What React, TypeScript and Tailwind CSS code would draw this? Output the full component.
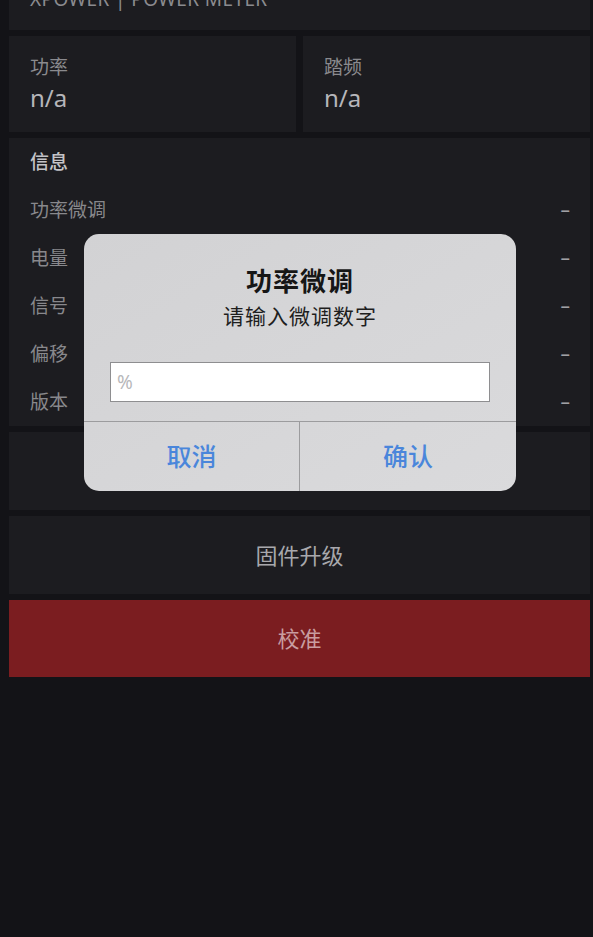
import React from "react";

const FONT = { fontFamily: "'Noto Sans', 'Noto Sans CJK SC', sans-serif" };

const INFO_ROWS = [
  { label: "功率微调", value: "–" },
  { label: "电量", value: "–" },
  { label: "信号", value: "–" },
  { label: "偏移", value: "–" },
  { label: "版本", value: "–" },
];

export default function App() {
  return (
    <div className="relative w-full h-[937px] overflow-hidden bg-[#131317]" style={FONT}>
      <div className="flex flex-col gap-[6px] pl-[9px] pr-[3px]">
        {/* ── Header ─────────────────────────────────── */}
        <div className="h-[30px] bg-[#1c1c20] overflow-hidden pl-[21px]">
          <div className="-mt-[11px] text-[19px] leading-[20px] text-[#8b8b8f] tracking-[0.4px]">
            XPOWER | POWER METER
          </div>
        </div>

        {/* ── Live values ────────────────────────────── */}
        <div className="grid grid-cols-2 gap-[7px]">
          {["功率", "踏频"].map((label) => (
            <div key={label} className="h-[96px] bg-[#1c1c20] pl-[21px] pt-[19px]">
              <div className="text-[19px] leading-[24px] text-[#8a8a8e]">{label}</div>
              <div className="mt-[3px] text-[24px] leading-[32px] text-[#b6b6ba]">n/a</div>
            </div>
          ))}
        </div>

        {/* ── Info ───────────────────────────────────── */}
        <div className="bg-[#1c1c20] pl-[21px] pr-[20px]">
          <div className="h-[48px] flex items-center text-[19px] font-medium text-[#c4c4c8]">信息</div>
          {INFO_ROWS.map((row) => (
            <div key={row.label} className="h-[48px] flex items-center justify-between text-[19px] text-[#88888c]">
              <span>{row.label}</span>
              <span className="text-[#a0a0a4]">{row.value}</span>
            </div>
          ))}
        </div>

        {/* ── Buttons ────────────────────────────────── */}
        <div className="h-[78px] bg-[#1c1c20] flex items-center justify-center text-[22px] text-[#a8a8ac]">
          功率微调
        </div>
        <div className="h-[78px] bg-[#1c1c20] flex items-center justify-center text-[22px] text-[#a8a8ac]">
          固件升级
        </div>
        <div className="h-[77px] bg-[#7b1d20] flex items-center justify-center text-[22px] text-[#c99ea0]">
          校准
        </div>
      </div>

      {/* ── Alert dialog ─────────────────────────────── */}
      <div className="absolute left-[84px] top-[234px] w-[432px] h-[257px] rounded-[15px] bg-gradient-to-br from-[#d2d2d4] to-[#dadadc] flex flex-col overflow-hidden">
        <div className="pt-[32px] text-center text-[26px] leading-[30px] font-bold text-[#161616] tracking-[1px]">
          功率微调
        </div>
        <div className="mt-[6px] text-center text-[21px] leading-[28px] text-[#1e1e1e] tracking-[1px]">
          请输入微调数字
        </div>
        <div className="mt-[32px] mx-[26px] h-[40px] bg-white border border-[#8e8e90] flex items-center pl-[6px] text-[19px] text-[#b8b8ba]">
          %
        </div>
        <div className="mt-[19px] flex-1 grid grid-cols-2 border-t border-[#9c9c9e]">
          <div className="flex items-center justify-center text-[25px] font-medium text-[#4a86db] border-r border-[#9c9c9e]">
            取消
          </div>
          <div className="flex items-center justify-center text-[25px] font-medium text-[#4a86db]">
            确认
          </div>
        </div>
      </div>
    </div>
  );
}
